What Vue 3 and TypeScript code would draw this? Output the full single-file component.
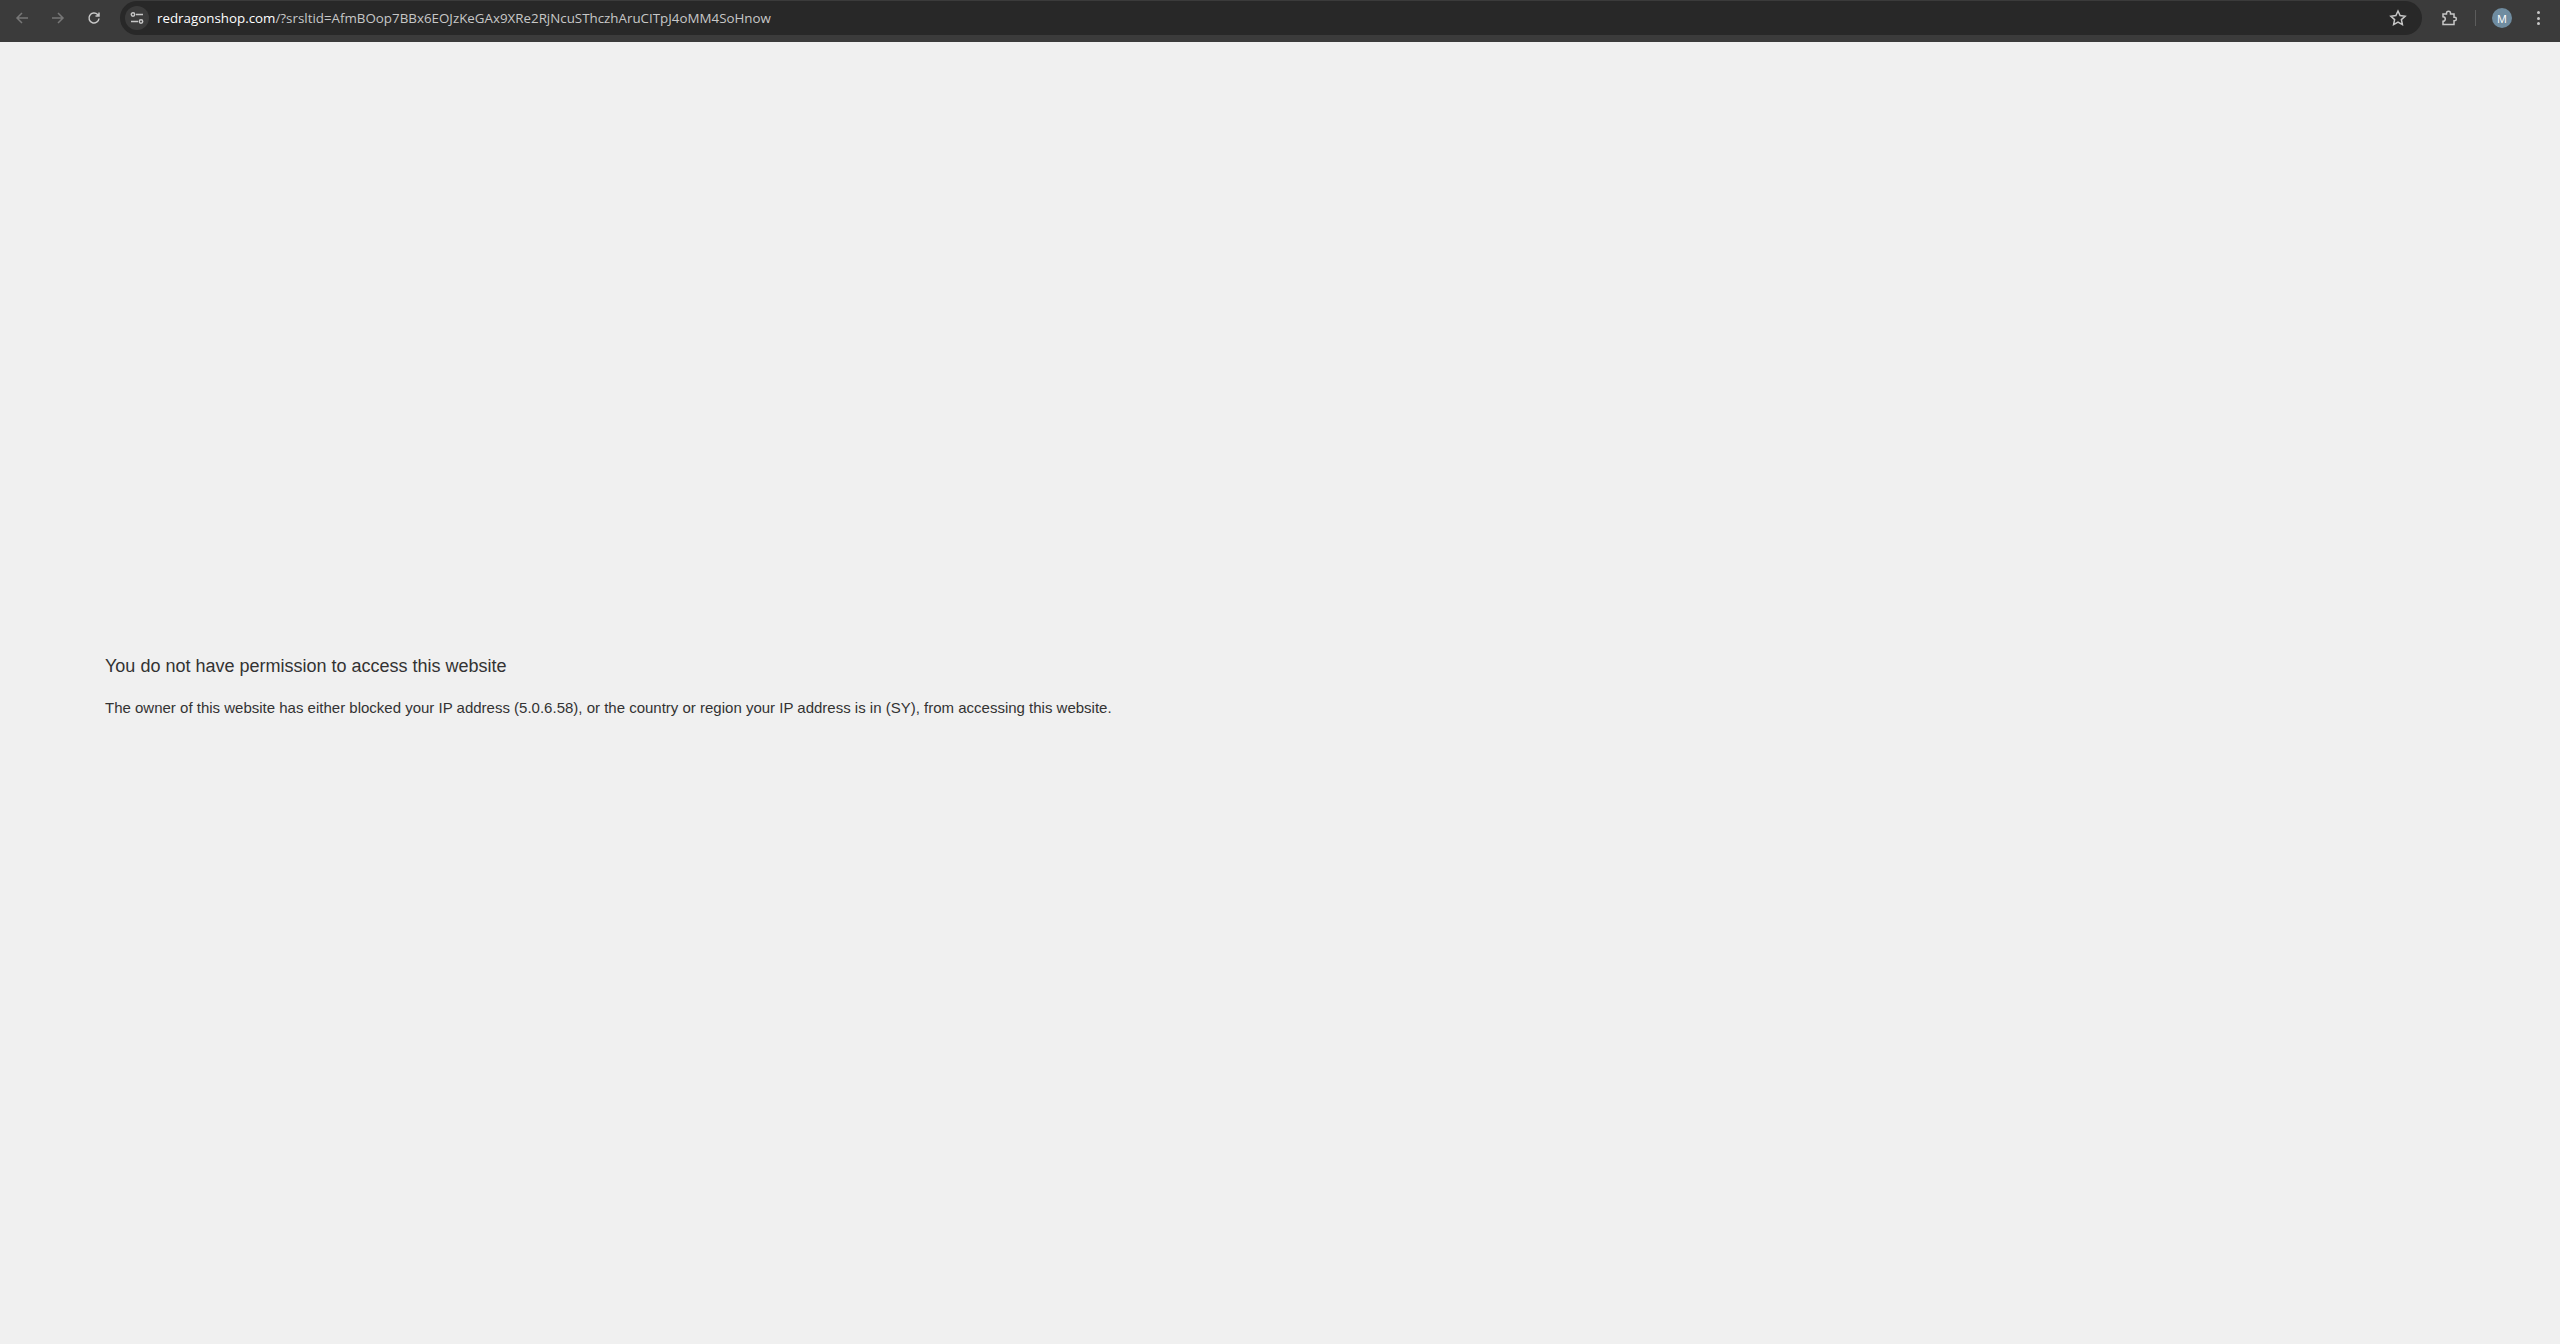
<script setup lang="ts">
const host = 'redragonshop.com'
const query = '/?srsltid=AfmBOop7BBx6EOJzKeGAx9XRe2RjNcuSThczhAruCITpJ4oMM4SoHnow'
</script>

<template>
  <div class="window">
    <header class="toolbar">
      <div class="nav">
        <button class="nav-btn dim">
          <svg width="16" height="16" viewBox="0 0 16 16"><path d="M14 8H3M8 3 3 8l5 5" /></svg>
        </button>
        <button class="nav-btn dim">
          <svg width="16" height="16" viewBox="0 0 16 16"><path d="M2 8h11M8 3l5 5-5 5" /></svg>
        </button>
        <button class="nav-btn">
          <svg width="16" height="16" viewBox="0 0 16 16"><path d="M13 8.500A5 5 0 1 1 11.600 4.500L13 6M13 2.500V6H9.500" /></svg>
        </button>
      </div>

      <div class="omnibox">
        <span class="site-info">
          <svg width="16" height="16" viewBox="0 0 16 16">
            <path d="M7 4.500h7M2 11.500h7" />
            <circle cx="4" cy="4.500" r="1.700" />
            <circle cx="12" cy="11.500" r="1.700" />
          </svg>
        </span>
        <span class="url"><span class="host">{{ host }}</span>{{ query }}</span>
        <svg class="star" width="18" height="18" viewBox="0 0 18 18">
          <path d="m9 2 2.100 4.600 5 .6-3.700 3.400 1 5L9 13.100l-4.400 2.500 1-5L1.900 7.200l5-.6z" />
        </svg>
      </div>

      <div class="actions">
        <svg class="puzzle" width="18" height="18" viewBox="0 0 18 18">
          <path d="M3 5h3.500v-.7a2 2 0 0 1 4 0v.7H14v3.300h.7a1.700 1.700 0 0 1 0 3.400H14v3.800H3v-3.200a2.300 2.300 0 0 0 0-4.600z" />
        </svg>
        <span class="divider"></span>
        <span class="avatar">M</span>
        <span class="menu"><i></i><i></i><i></i></span>
      </div>
    </header>

    <main class="page">
      <h1>You do not have permission to access this website</h1>
      <p>The owner of this website has either blocked your IP address (5.0.6.58), or the country or region your IP address is in (SY), from accessing this website.</p>
    </main>
  </div>
</template>

<style>
html,
body {
  margin: 0;
  background: #f0f0f0;
}
</style>

<style scoped>
.window {
  display: flex;
  flex-direction: column;
  height: 1344px;
  overflow: hidden;
}

.toolbar {
  display: flex;
  align-items: center;
  height: 42px;
  flex-shrink: 0;
  padding-bottom: 6px;
  box-sizing: border-box;
  background: #3b3b3b;
}

svg {
  fill: none;
  stroke: #c7c7c7;
  stroke-width: 1.5;
}

.nav {
  display: flex;
  align-items: center;
  gap: 20px;
  padding-left: 14px;
  width: 120px;
  box-sizing: border-box;
}

.nav-btn {
  display: flex;
  padding: 0;
  border: 0;
  background: none;
}

.nav-btn.dim svg {
  stroke: #777;
}

.omnibox {
  display: flex;
  align-items: center;
  width: 2302px;
  height: 34px;
  box-sizing: border-box;
  padding: 0 15px 0 5px;
  border-radius: 17px;
  background: #282828;
}

.site-info {
  display: flex;
  align-items: center;
  justify-content: center;
  width: 24px;
  height: 24px;
  border-radius: 50%;
  background: #3b3b3b;
}

.url {
  flex: 1;
  margin-left: 8px;
  font: 13.350px "Open Sans", "Noto Sans", sans-serif;
  color: #c7c7c7;
  white-space: nowrap;
}

.host {
  color: #fff;
}

.actions {
  display: flex;
  align-items: center;
  flex: 1;
  padding-left: 18px;
}

.divider {
  width: 1px;
  height: 16px;
  margin: 0 16px 0 17px;
  background: #5c5c5c;
}

.avatar {
  display: flex;
  align-items: center;
  justify-content: center;
  width: 20px;
  height: 20px;
  border-radius: 50%;
  background: #6f8ca0;
  color: #fff;
  font: 11px "Open Sans", sans-serif;
}

.menu {
  display: flex;
  flex-direction: column;
  gap: 2.500px;
  margin-left: 25px;
}

.menu i {
  width: 3px;
  height: 3px;
  border-radius: 50%;
  background: #c7c7c7;
}

.page {
  flex: 1;
  padding: 612px 0 0 105px;
  background: #f0f0f0;
  color: #333;
  font-family: "Liberation Sans", Arial, sans-serif;
}

h1 {
  margin: 0 0 20px;
  font-size: 18px;
  font-weight: 400;
  line-height: 24px;
}

p {
  margin: 0;
  font-size: 15px;
  line-height: 20px;
}
</style>
